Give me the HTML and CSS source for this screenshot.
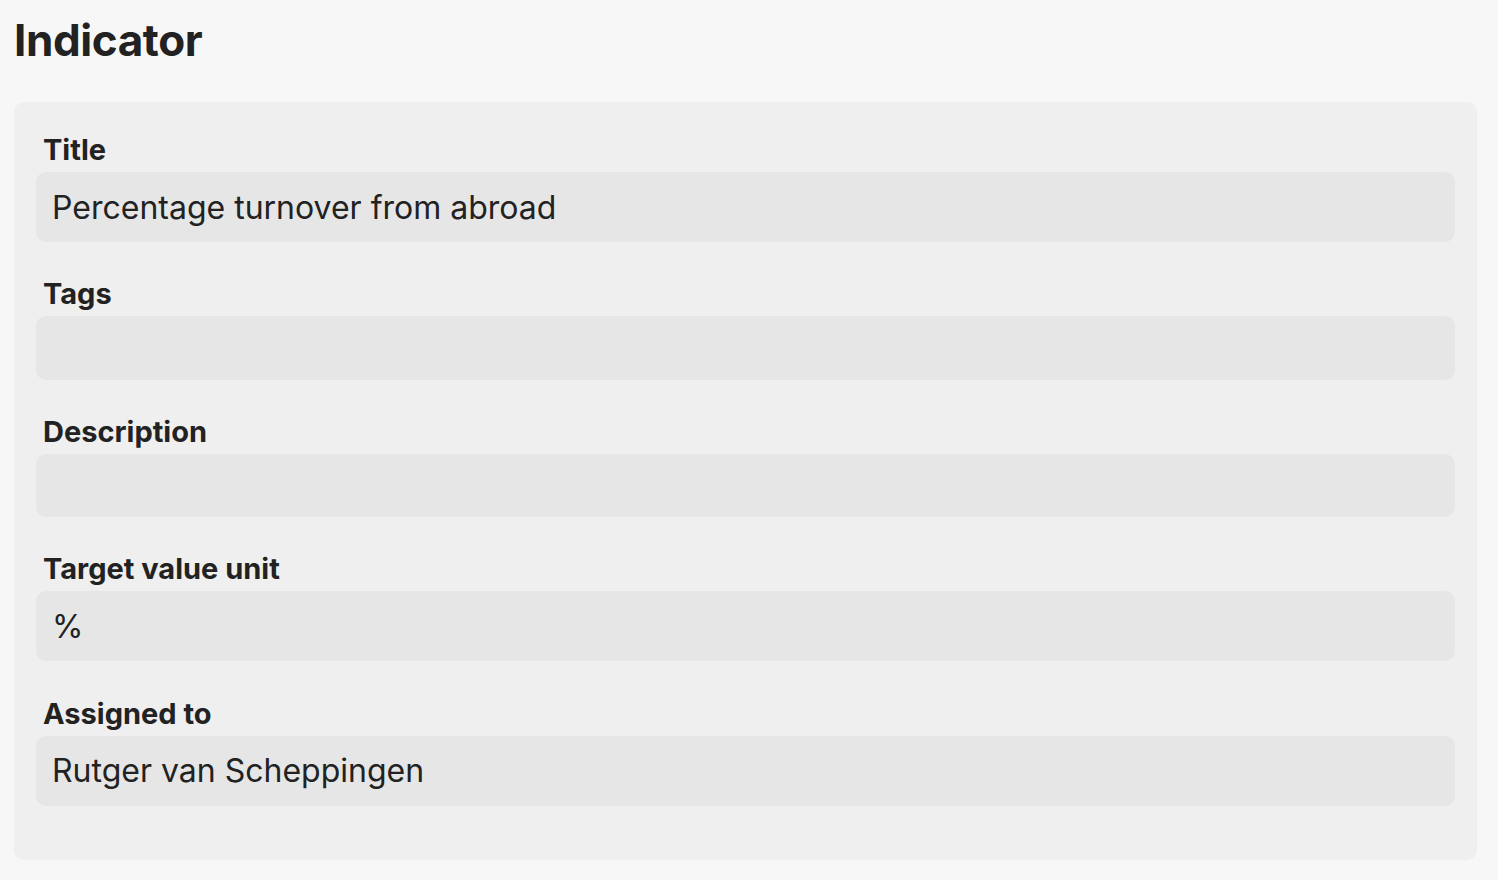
FILE: index.html
```html
<!DOCTYPE html>
<html lang="en">
<head>
	<meta charset="UTF-8">
	<meta name="viewport" content="width=device-width, initial-scale=1.0">
	<link rel="stylesheet" href="styles.css">
	<title>Indicator</title>
</head>
<body>
	<main class="page">
		<h1 class="page-title">Indicator</h1>
		<form class="card">
			<div class="field">
				<label class="field-label" for="input-title">Title</label>
				<div class="field-input" id="input-title">Percentage turnover from abroad</div>
			</div>
			<div class="field">
				<label class="field-label" for="input-tags">Tags</label>
				<div class="field-input empty" id="input-tags"></div>
			</div>
			<div class="field">
				<label class="field-label" for="input-description">Description</label>
				<div class="field-input empty" id="input-description"></div>
			</div>
			<div class="field">
				<label class="field-label" for="input-unit">Target value unit</label>
				<div class="field-input" id="input-unit">%</div>
			</div>
			<div class="field">
				<label class="field-label" for="input-assigned">Assigned to</label>
				<div class="field-input" id="input-assigned">Rutger van Scheppingen</div>
			</div>
		</form>
	</main>
</body>
</html>
```

FILE: styles.css
```css
* {
	box-sizing: border-box;
}

:root {
	--bg: #f7f7f7;
	--card: #efefef;
	--input: #e6e6e6;
	--fg: #222;
}

body {
	margin: 0;
	background: var(--bg);
	color: var(--fg);
	font-family: Inter, 'Noto Sans', sans-serif;
}

.page {
	padding: 0 21px 0 14px;
}

.page-title {
	margin: 0;
	padding: 12px 0 0;
	font-size: 44px;
	line-height: 56px;
	font-weight: 700;
	letter-spacing: -0.4px;
}

.card {
	margin-top: 34px;
	padding: 31px 22px 54px;
	background: var(--card);
	border-radius: 10px;
}

.field + .field {
	margin-top: 35.3px;
}

.field-label {
	display: block;
	padding-left: 7px;
	margin-bottom: 5px;
	font-size: 29px;
	line-height: 34px;
	font-weight: 700;
}

.field-input {
	height: 70px;
	padding: 0 16px;
	display: flex;
	align-items: center;
	background: var(--input);
	border-radius: 10px;
	font-size: 32px;
}
.field-input.empty {
	height: 63.3px;
}
```
